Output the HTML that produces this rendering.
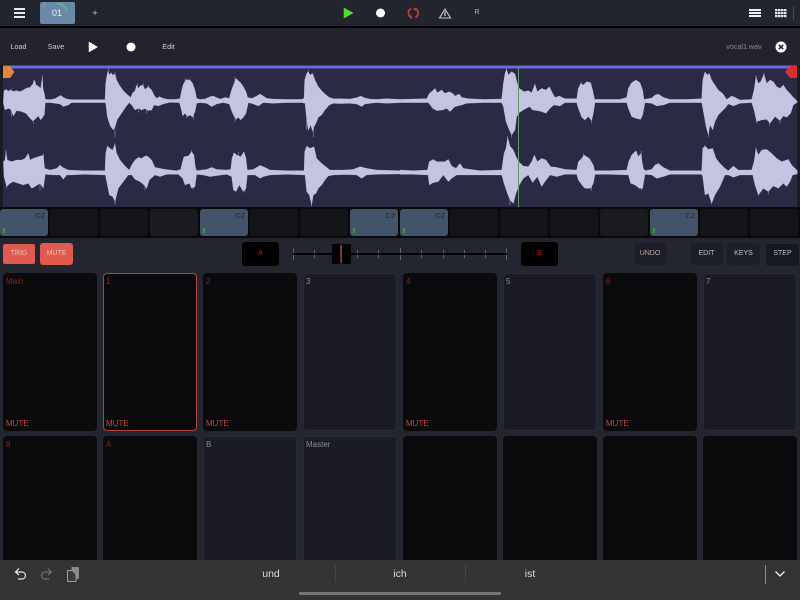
<!DOCTYPE html>
<html><head><meta charset="utf-8"><style>
html,body{margin:0;padding:0;width:800px;height:600px;overflow:hidden;background:#23262f;font-family:"Liberation Sans",sans-serif}
#r{position:absolute;left:0;top:0;width:800px;height:600px;overflow:hidden;filter:blur(.35px)}
.a{position:absolute;box-sizing:border-box}
.t{position:absolute;font-size:7.200px;line-height:10px;color:#d0d0d4;text-align:center;transform:translateX(-50%);white-space:nowrap}
.s{position:absolute;top:209px;width:48px;height:27px;background:#141518;border-radius:3px}
.s.on{background:#43546a}
.s.on:before{content:"C2";position:absolute;right:3px;top:3px;font-size:7.500px;line-height:8px;color:#23262f}
.s.on:after{content:"";position:absolute;left:3px;bottom:3px;width:2px;height:5px;background:#3f9a3a}
.p{position:absolute;width:94px;background:#0b0b0e;border-radius:4px;font-size:8px;color:#8a241b;padding:4px 3px;box-sizing:border-box;line-height:10px}
.p.l{background:#1a1b24;border:1px solid #292c38;color:#8c8c95;padding:3px 2px}
.p b{position:absolute;left:3px;bottom:2px;font-weight:normal;font-size:8px;color:#c2453e}
.b{position:absolute;top:243px;height:22px;background:#1d1f28;border-radius:3px;font-size:7px;line-height:22px;text-align:center;color:#c0c0c8}
</style></head><body><div id="r">
<div class="a" style="left:0;top:0;width:800px;height:26px;background:#22252d"></div>
<div class="a" style="left:0;top:26px;width:800px;height:2px;background:#000"></div>
<div class="a" style="left:0;top:28px;width:800px;height:180px;background:#23232e"></div>

<svg class="a" style="left:0;top:0" width="800" height="28" viewBox="0 0 800 28">
<rect x="14" y="8" width="11" height="2" fill="#e8e8e8"/><rect x="14" y="12" width="11" height="2" fill="#e8e8e8"/><rect x="14" y="16" width="11" height="2" fill="#e8e8e8"/>
<rect x="40" y="2" width="35" height="22" rx="2" fill="#6a89a8"/>
<path d="M57 3.500C62 3.500 65.500 7 67 11.500" fill="none" stroke="#58cc58" stroke-width="1.200"/>
<path d="M344 8L353 13L344 18Z" fill="#53d933" stroke="#53d933" stroke-width=".6"/>
<circle cx="380.500" cy="13" r="4.500" fill="#fff"/>
<path d="M411 8.800C407.500 10 407.500 16.500 411.500 17.500M410 15.500L412 18.500M415.500 8.500C419 10 418.800 16.500 415 17.300M414 7.800L415.500 10.500" fill="none" stroke="#c83c30" stroke-width="1.700"/>
<path d="M445 9L450.500 18H439.500Z" fill="none" stroke="#c8c8c8" stroke-width="1.100"/><path d="M445 11.500V16" stroke="#c8c8c8" stroke-width="1.300"/>
<rect x="749" y="9" width="12" height="2" fill="#f0f0f0"/><rect x="749" y="12" width="12" height="2" fill="#f0f0f0"/><rect x="749" y="15" width="12" height="2" fill="#f0f0f0"/>
<g fill="#e8e8e8"><rect x="775" y="9" width="2.500" height="2.200"/><rect x="778" y="9" width="2.500" height="2.200"/><rect x="781" y="9" width="2.500" height="2.200"/><rect x="784" y="9" width="2.500" height="2.200"/>
<rect x="775" y="12" width="2.500" height="2.200"/><rect x="778" y="12" width="2.500" height="2.200"/><rect x="781" y="12" width="2.500" height="2.200"/><rect x="784" y="12" width="2.500" height="2.200"/>
<rect x="775" y="15" width="2.500" height="2.200"/><rect x="778" y="15" width="2.500" height="2.200"/><rect x="781" y="15" width="2.500" height="2.200"/><rect x="784" y="15" width="2.500" height="2.200"/></g>
<rect x="793" y="6" width="1" height="14" fill="#4a4c54"/>
</svg>
<div class="t" style="left:44px;top:1px;font-size:6px;color:#8fa6bd">1</div>
<div class="t" style="left:57px;top:8px;font-size:9px;color:#eef2f6">01</div>
<div class="t" style="left:95px;top:8px;font-size:9px">+</div>
<div class="t" style="left:477px;top:8px;font-size:7px;color:#b8b8bc">R</div>
<div class="t" style="left:18.500px;top:42px">Load</div>
<div class="t" style="left:56px;top:42px">Save</div>
<div class="t" style="left:168.500px;top:42px">Edit</div>
<div class="t" style="left:744px;top:42px;color:#8a8a92">vocal1.wav</div>

<svg class="a" style="left:0;top:28px" width="800" height="180" viewBox="0 28 800 180">
<path d="M89 42L97.500 47L89 52Z" fill="#fff" stroke="#fff" stroke-width=".5"/>
<circle cx="131" cy="47" r="4.500" fill="#fff"/>
<circle cx="781" cy="47" r="5.500" fill="#fff"/><path d="M778.800 44.800L783.200 49.200M783.200 44.800L778.800 49.200" stroke="#23232e" stroke-width="1.500"/>
<rect x="0" y="65" width="800" height="143" fill="#1b1b24"/>
<rect x="3" y="68" width="794" height="139" fill="#2a2a45"/>
<rect x="3" y="65.500" width="794" height="3" fill="#6b6be0"/>
<g fill="#c4c4e2" stroke="#c4c4e2" stroke-width="1.500" stroke-opacity=".45" stroke-linejoin="round">
<g transform="translate(0 60) scale(.33333)">
<polygon points="10,123 12,92 20,88 24,94 30,90 40,94 50,92 60,95 70,90 80,84 90,82 100,70 104,60 108,75 115,78 122,85 127,50 129,85 133,100 136,118 150,119 165,116 175,110 182,106 190,112 200,117 215,119 240,119 280,119 315,119 317,70 320,50 324,32 328,45 333,38 338,45 345,42 350,60 358,75 370,92 380,102 392,112 397,100 405,92 410,75 415,85 420,78 428,75 435,88 445,80 455,90 462,105 470,115 478,110 490,115 505,118 525,118 540,116 545,90 550,72 555,65 560,58 565,60 572,62 578,70 585,90 590,115 600,118 615,117 630,110 640,108 650,113 662,117 675,112 688,115 692,98 700,75 708,55 715,62 722,68 730,80 738,95 743,112 755,115 770,108 780,102 790,108 800,115 820,117 860,118 905,118 912,115 914,60 920,40 925,35 930,45 938,40 945,60 955,80 965,92 975,102 988,112 1000,116 1020,116 1050,117 1070,113 1082,108 1095,114 1110,117 1130,118 1160,116 1200,118 1200,128 1160,130 1130,128 1110,130 1095,132 1085,140 1070,132 1050,130 1020,131 1000,130 988,135 975,150 965,165 955,172 948,190 942,200 938,215 932,195 925,212 920,180 915,130 905,128 860,128 820,130 790,128 775,138 760,132 745,128 738,160 730,172 722,180 715,172 708,178 700,165 692,145 688,132 670,128 650,132 635,140 620,130 600,128 590,130 585,155 578,172 570,165 563,170 555,160 548,168 543,145 538,128 510,127 490,132 475,138 462,135 455,150 445,152 435,146 425,150 415,145 405,150 395,135 388,128 378,140 368,155 358,170 352,178 347,195 340,210 332,200 328,190 322,170 317,130 315,128 280,128 240,128 215,128 205,135 190,140 180,132 165,130 150,128 136,128 133,165 128,172 122,180 115,168 105,178 98,183 88,172 78,160 65,155 50,152 40,168 32,148 25,145 15,150 10,130"/>
<polygon points="10,305 15,300 18,275 22,300 35,305 50,300 65,300 75,295 85,280 90,300 100,295 115,290 130,285 134,325 150,330 170,325 180,315 188,322 205,330 250,332 315,332 317,280 322,258 330,265 338,270 345,252 350,280 360,300 375,318 388,330 395,315 405,300 415,292 425,295 435,288 445,290 455,300 465,322 480,325 495,328 530,332 542,328 546,310 552,290 565,288 575,275 582,285 586,320 590,332 620,328 635,322 650,328 680,330 692,328 696,295 702,278 710,285 722,290 732,275 738,295 742,330 760,328 780,316 795,322 810,330 860,332 912,332 914,275 920,258 930,265 942,260 950,295 965,310 980,322 990,330 1030,330 1060,328 1080,320 1100,325 1130,330 1200,332 1200,342 1130,343 1100,345 1085,355 1070,345 1040,344 1000,345 985,348 975,360 965,375 955,385 948,400 940,405 935,435 928,405 920,395 915,345 860,343 810,345 790,350 780,355 765,345 742,345 738,385 730,395 718,375 708,395 700,390 695,350 680,343 650,347 630,350 610,345 590,343 585,380 575,385 568,370 555,375 548,355 535,343 500,343 480,350 465,345 448,360 440,385 432,375 420,365 405,358 395,345 385,345 370,365 355,385 345,425 338,410 328,405 322,375 316,345 250,343 215,345 200,345 190,358 180,345 160,345 136,343 130,385 120,370 105,380 95,385 85,370 70,375 55,370 40,365 30,370 20,380 12,350"/>
<path fill="none" stroke-width="2" stroke-opacity=".6" d="M127 45V95M35 85V170M100 60V190M325 25V60M345 35V70M345 180V232M412 70V100M430 70V95M445 75V100M415 145V158M440 145V160M555 55V85M570 55V85M560 160V175M580 160V178M705 50V80M705 170V185M925 30V60M940 195V232M920 180V210M18 270V310M130 280V320M120 370V392M345 250V280M345 400V435M440 285V310M435 375V392M575 270V300M580 370V388M715 275V300M735 370V398M935 400V440M20 360V385"/>
</g>
<g transform="translate(400 60) scale(.33333)">
<polygon points="0,118 40,117 80,116 88,100 98,92 105,85 112,98 125,90 135,100 148,95 158,100 165,108 178,102 185,112 205,116 250,118 305,117 310,70 315,40 320,28 325,45 335,35 345,42 352,70 358,85 372,95 385,92 395,98 405,72 412,95 425,85 438,90 448,80 458,100 465,112 478,108 495,116 530,116 535,85 542,70 550,75 560,65 572,68 578,90 584,118 620,118 660,118 680,112 685,85 695,68 708,60 720,68 728,90 732,118 755,114 765,105 775,102 790,112 810,118 860,118 905,116 908,60 915,35 922,45 928,40 935,60 945,75 955,90 968,100 980,118 995,108 1005,112 1020,120 1055,118 1062,90 1068,50 1075,70 1082,65 1092,42 1100,70 1110,60 1120,65 1130,80 1140,85 1150,75 1160,90 1170,100 1178,110 1190,122 1192,125 1192,127 1180,135 1172,160 1160,172 1150,168 1140,182 1125,170 1110,190 1100,178 1085,180 1070,185 1062,150 1055,128 1020,130 1000,138 985,132 975,145 965,155 955,165 945,185 938,210 930,195 925,225 918,200 912,165 905,128 860,128 810,128 790,135 770,138 755,130 735,128 728,165 722,178 708,175 695,170 685,145 680,128 620,128 585,128 580,160 575,182 565,170 555,180 545,172 535,145 530,128 495,128 480,138 462,135 450,145 438,160 425,155 412,152 398,150 388,140 370,150 358,158 350,170 345,210 335,225 328,210 318,185 310,140 305,128 250,128 200,130 185,135 165,140 150,155 140,145 128,150 110,152 98,145 85,128 40,128 0,128"/>
<polygon points="0,330 40,332 82,330 88,305 100,298 110,305 120,305 135,305 145,298 155,318 168,325 180,310 190,325 240,332 305,330 312,280 318,265 323,232 330,258 340,270 348,290 356,305 370,318 385,320 395,305 403,285 412,305 425,295 438,300 452,320 470,322 495,328 530,330 535,305 545,295 552,285 568,295 580,315 584,332 630,332 680,330 686,305 695,285 708,272 715,290 722,280 730,325 735,332 755,328 765,315 775,310 790,322 810,332 905,332 908,265 915,258 925,268 938,265 948,295 960,310 975,325 985,332 1000,318 1015,330 1055,330 1062,305 1068,265 1075,285 1085,270 1100,268 1115,280 1130,295 1145,305 1165,298 1175,315 1192,332 1192,342 1178,345 1170,365 1160,380 1150,370 1135,385 1120,378 1105,395 1090,385 1075,405 1065,375 1058,345 1020,345 1000,352 985,345 975,345 960,380 945,405 935,430 925,400 915,405 908,350 905,343 810,343 790,350 770,355 755,345 735,343 728,385 718,385 705,375 692,370 685,345 630,343 585,343 580,370 572,385 555,385 548,378 535,360 530,343 495,343 470,350 450,345 435,365 425,380 412,350 398,368 385,345 370,355 358,375 348,400 340,430 330,420 322,400 312,370 305,345 240,345 190,345 170,345 155,355 145,365 130,345 115,365 100,368 88,375 84,345 40,343 0,343"/>
<path fill="none" stroke-width="2" stroke-opacity=".6" d="M320 25V60M335 200V232M545 65V90M575 165V190M925 200V232M1068 45V80M1092 38V70M1108 170V198M1070 165V190M1140 170V190M323 228V270M330 410V435M550 280V310M575 370V392M725 272V300M725 370V392M915 255V280M935 410V432M1068 262V290M1075 380V408M1105 380V402"/>
</g></g>
<rect x="518" y="68" width="1" height="139" fill="#5f9a62"/>
<path d="M3 66H10L14.500 72L10 78H3Z" fill="#e0853a"/>
<path d="M797 66H790L785 72L790 78H797Z" fill="#d83030"/>
</svg>

<div class="a" style="left:0;top:207px;width:800px;height:31px;background:#0a0a0c"></div>
<div class="s on" style="left:0"></div><div class="s" style="left:50px"></div><div class="s" style="left:100px"></div><div class="s" style="left:150px;background:#1b1c1f"></div>
<div class="s on" style="left:200px"></div><div class="s" style="left:250px"></div><div class="s" style="left:300px"></div><div class="s on" style="left:350px"></div>
<div class="s on" style="left:400px"></div><div class="s" style="left:450px"></div><div class="s" style="left:500px"></div><div class="s" style="left:550px"></div>
<div class="s" style="left:600px;background:#1a1b1e"></div><div class="s on" style="left:650px"></div><div class="s" style="left:700px"></div><div class="s" style="left:750px"></div>

<div class="b" style="left:3px;top:244px;width:32px;height:20px;line-height:20px;background:#e05a50;color:#f6bcb4;border-radius:2px">TRIG</div>
<div class="b" style="left:40px;width:33px;background:#e05a50;color:#f6bcb4">MUTE</div>
<div class="b" style="left:242px;top:242px;width:37px;height:24px;line-height:24px;background:#000;color:#b81f16">A</div>
<div class="b" style="left:521px;top:242px;width:37px;height:24px;line-height:24px;background:#000;color:#b81f16">B</div>
<div class="b" style="left:634px;width:32px;color:#c4a4a8">UNDO</div>
<div class="b" style="left:690px;width:33px">EDIT</div>
<div class="b" style="left:727px;width:33px">KEYS</div>
<div class="b" style="left:765px;width:33px;background:#171922;border:1px solid #262934;line-height:20px">STEP</div>

<svg class="a" style="left:285px;top:240px" width="230" height="28" viewBox="285 240 230 28">
<g fill="#62646c"><rect x="293" y="248" width="1" height="12"/><rect x="314" y="250" width="1" height="8"/><rect x="357" y="250" width="1" height="8"/><rect x="378" y="250" width="1" height="8"/><rect x="400" y="248" width="1" height="12"/><rect x="421" y="250" width="1" height="8"/><rect x="443" y="250" width="1" height="8"/><rect x="464" y="250" width="1" height="8"/><rect x="485" y="250" width="1" height="8"/><rect x="506" y="248" width="1" height="12"/></g>
<rect x="293" y="253" width="214" height="2" fill="#000"/>
<rect x="332" y="244" width="19" height="20" fill="#000"/>
<rect x="340.500" y="245" width="1.200" height="18" fill="#d8584c"/>
</svg>

<div class="p" style="left:3px;top:273px;height:158px">Main<b>MUTE</b></div>
<div class="p" style="left:103px;top:273px;height:158px;border:1px solid #b5413a;padding:3px 2px">1<b style="left:2px;bottom:1px">MUTE</b></div>
<div class="p" style="left:203px;top:273px;height:158px">2<b>MUTE</b></div>
<div class="p l" style="left:303px;top:273px;height:158px">3</div>
<div class="p" style="left:403px;top:273px;height:158px">4<b>MUTE</b></div>
<div class="p l" style="left:503px;top:273px;height:158px">5</div>
<div class="p" style="left:603px;top:273px;height:158px">6<b>MUTE</b></div>
<div class="p l" style="left:703px;top:273px;height:158px">7</div>
<div class="p" style="left:3px;top:436px;height:130px">8</div>
<div class="p" style="left:103px;top:436px;height:130px">A</div>
<div class="p l" style="left:203px;top:436px;height:130px">B</div>
<div class="p l" style="left:303px;top:436px;height:130px">Master</div>
<div class="p" style="left:403px;top:436px;height:130px"></div>
<div class="p" style="left:503px;top:436px;height:130px"></div>
<div class="p" style="left:603px;top:436px;height:130px"></div>
<div class="p" style="left:703px;top:436px;height:130px"></div>

<div class="a" style="left:0;top:560px;width:800px;height:40px;background:#343436"></div>
<svg class="a" style="left:0;top:560px" width="800" height="40" viewBox="0 560 800 40">
<path d="M19 568.500L15.500 572L19 575M16 572H22C26.500 572 26.500 579 22 579H18" fill="none" stroke="#e8e8e8" stroke-width="1.200"/>
<path d="M48 568.500L51.500 572L48 575M51 572H45C40.500 572 40.500 579 45 579H49" fill="none" stroke="#717173" stroke-width="1.200"/>
<path d="M71.500 567H78C78.700 567 79 567.400 79 568V578C79 578.500 78.700 579 78 579H71.500Z" fill="#8a8a8c"/>
<path d="M67.500 570.500H72.500L76 574V581.500H67.500Z" fill="#3c3c3e" stroke="#9a9a9c" stroke-width="1"/>
<rect x="335" y="565" width="1" height="17" fill="#454547"/><rect x="465" y="565" width="1" height="17" fill="#454547"/>
<rect x="765" y="565" width="1" height="19" fill="#8a8a8c"/>
<path d="M775.500 571.500L780 576L784.500 571.500" fill="none" stroke="#f0f0f0" stroke-width="1.300"/>
<rect x="299" y="592" width="202" height="3" rx="1.500" fill="#77777a"/>
</svg>
<div class="t" style="left:271px;top:568px;font-size:10.500px;line-height:12px;color:#dedede">und</div>
<div class="t" style="left:400px;top:568px;font-size:10.500px;line-height:12px;color:#dedede">ich</div>
<div class="t" style="left:530px;top:568px;font-size:10.500px;line-height:12px;color:#dedede">ist</div>
</div></body></html>
